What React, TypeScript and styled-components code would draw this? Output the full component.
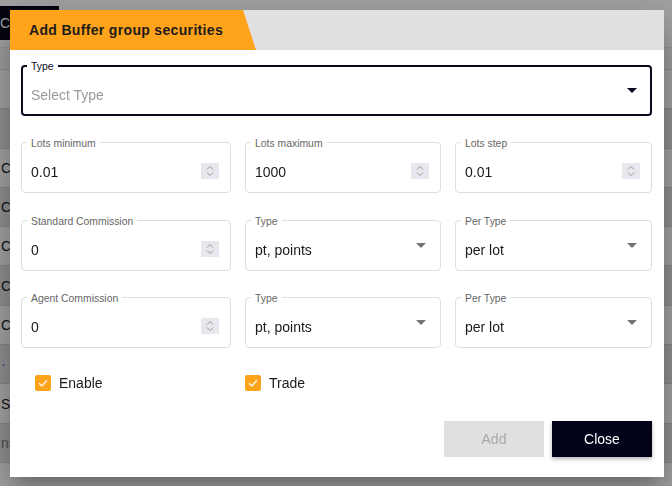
import React from "react";
import styled, { createGlobalStyle } from "styled-components";

const Global = createGlobalStyle`
  html, body { margin: 0; padding: 0; }
  body {
    font-family: "Liberation Sans", Arial, sans-serif;
    background: #ffffff;
    width: 672px;
    height: 486px;
    overflow: hidden;
  }
  * { box-sizing: border-box; }
`;

/* ---------- background page ---------- */
const Page = styled.div`
  width: 672px;
  height: 486px;
  overflow: hidden;
  background: #ffffff;
`;

const TopBar = styled.div`
  height: 48px;
  display: flex;
  align-items: flex-start;
  padding-top: 6px;
  border-bottom: 1px solid #e4e4e4;
`;

const DarkButton = styled.div`
  width: 59px;
  height: 34px;
  background: #060618;
  color: #ffffff;
  font-size: 14px;
  display: flex;
  align-items: center;
`;

const Clip = styled.span`
  width: 10px;
  overflow: hidden;
  white-space: nowrap;
`;

const TableHead = styled.div`
  height: 22px;
  border-bottom: 1px solid #dadada;
  background: #f6f6f6;
`;

const Row = styled.div<{ $alt: boolean; $tone?: string }>`
  height: 39.3px;
  display: flex;
  align-items: center;
  padding-left: 1px;
  font-size: 14px;
  color: ${(p) => (p.$tone === "link" ? "#1c5fd0" : p.$tone === "muted" ? "#777" : "#1a1a1a")};
  background: ${(p) => (p.$alt ? "#e2e2e2" : "#ffffff")};
  border-bottom: 1px solid #d6d6d6;
  white-space: nowrap;
`;

const Overlay = styled.div`
  position: fixed;
  inset: 0;
  background: rgba(0, 0, 0, 0.37);
`;

/* ---------- modal ---------- */
const Modal = styled.div`
  position: fixed;
  left: 10px;
  top: 10px;
  width: 654px;
  background: #ffffff;
  box-shadow: 0 11px 15px -7px rgba(0, 0, 0, 0.2), 0 24px 38px 3px rgba(0, 0, 0, 0.14),
    0 9px 46px 8px rgba(0, 0, 0, 0.12);
`;

const Header = styled.div`
  height: 40px;
  background: #e0e0e0;
  display: flex;
`;

const Tab = styled.div`
  width: 246px;
  height: 100%;
  background: #ffa31a;
  clip-path: polygon(0 0, 233px 0, 246px 100%, 0 100%);
  display: flex;
  align-items: center;
  padding-left: 19px;
  font-weight: 700;
  font-size: 14px;
  letter-spacing: 0.33px;
  color: #1c1c1c;
  white-space: nowrap;
`;

const Body = styled.div`
  padding: 15px 12px 20px 11px;
  display: flex;
  flex-direction: column;
`;

const Stack = styled.div`
  display: flex;
  flex-direction: column;
  gap: 26px;
`;

const Grid = styled.div<{ $shift?: number }>`
  display: grid;
  grid-template-columns: 210px 196px 1fr;
  column-gap: 14px;
  margin-top: ${(p) => p.$shift ?? 0}px;
`;

const Field = styled.div<{ $focused?: boolean }>`
  position: relative;
  height: 51px;
  border: ${(p) => (p.$focused ? "2px solid #0b0b1f" : "1px solid #dedede")};
  border-radius: 4px;
  display: flex;
  align-items: center;
  padding: 9px ${(p) => (p.$focused ? "13px" : "14px")} 0 ${(p) => (p.$focused ? "8px" : "9px")};
`;

const FloatLabel = styled.span<{ $focused?: boolean }>`
  position: absolute;
  top: ${(p) => (p.$focused ? "-6px" : "-5px")};
  left: ${(p) => (p.$focused ? "4px" : "5px")};
  padding: 0 4px;
  background: #ffffff;
  font-size: 10.4px;
  line-height: 12px;
  color: ${(p) => (p.$focused ? "#0b0b1f" : "#666666")};
  white-space: nowrap;
`;

const Value = styled.span<{ $placeholder?: boolean }>`
  flex: 1;
  font-size: 14px;
  color: ${(p) => (p.$placeholder ? "#9a9a9a" : "#1a1a1a")};
  white-space: nowrap;
`;

const Spinner = styled.span`
  width: 18px;
  height: 16px;
  background: #e7e7ed;
  display: flex;
  align-items: center;
  justify-content: center;
  margin-right: -3px;
  margin-bottom: 2px;
`;

const ArrowWrap = styled.span`
  display: flex;
  margin-bottom: 9px;
`;

const CheckRow = styled(Grid)`
  margin-top: 27px;
  height: 16px;
  align-items: center;
`;

const CheckItem = styled.label<{ $indent: number }>`
  display: flex;
  align-items: center;
  gap: 8px;
  padding-left: ${(p) => p.$indent}px;
  font-size: 14px;
  color: #1a1a1a;
`;

const Box = styled.span`
  width: 16px;
  height: 16px;
  border-radius: 2px;
  background: #ffa31a;
  display: flex;
  align-items: center;
  justify-content: center;
`;

const Actions = styled.div`
  margin-top: 30px;
  display: flex;
  justify-content: flex-end;
  gap: 8px;
`;

const Button = styled.button<{ $primary?: boolean }>`
  width: 100px;
  height: 36px;
  border: none;
  font-family: "Liberation Sans", Arial, sans-serif;
  font-size: 14px;
  background: ${(p) => (p.$primary ? "#020218" : "#e0e0e0")};
  color: ${(p) => (p.$primary ? "#ffffff" : "#a9a9a9")};
  box-shadow: ${(p) => (p.$primary ? "0 2px 4px rgba(0,0,0,0.3)" : "none")};
  cursor: pointer;
`;

const SpinIcon = () => (
  <svg width="10" height="12" viewBox="0 0 10 12">
    <polyline points="2,4.5 5,1.5 8,4.5" fill="none" stroke="#9b9b9b" strokeWidth="1" />
    <polyline points="2,7.5 5,10.5 8,7.5" fill="none" stroke="#9b9b9b" strokeWidth="1" />
  </svg>
);

const Arrow = ({ color }: { color: string }) => (
  <svg width="10" height="5" viewBox="0 0 10 5">
    <polygon points="0,0 10,0 5,5" fill={color} />
  </svg>
);

const CheckIcon = () => (
  <svg width="12" height="12" viewBox="0 0 12 12">
    <polyline points="2,6.3 4.8,9 10,3.3" fill="none" stroke="#fff6e8" strokeWidth="1.4" />
  </svg>
);

type FieldDef = { label: string; value: string; kind: "number" | "select" };

const rows: FieldDef[][] = [
  [
    { label: "Lots minimum", value: "0.01", kind: "number" },
    { label: "Lots maximum", value: "1000", kind: "number" },
    { label: "Lots step", value: "0.01", kind: "number" },
  ],
  [
    { label: "Standard Commission", value: "0", kind: "number" },
    { label: "Type", value: "pt, points", kind: "select" },
    { label: "Per Type", value: "per lot", kind: "select" },
  ],
  [
    { label: "Agent Commission", value: "0", kind: "number" },
    { label: "Type", value: "pt, points", kind: "select" },
    { label: "Per Type", value: "per lot", kind: "select" },
  ],
];

const bgRows: { text: string; tone?: string }[] = [
  { text: "" },
  { text: "" },
  { text: "C" },
  { text: "C" },
  { text: "C" },
  { text: "C" },
  { text: "C" },
  { text: "·", tone: "link" },
  { text: "St" },
  { text: "ns", tone: "muted" },
  { text: "" },
];

export default function App() {
  return (
    <>
      <Global />
      <Page>
        <TopBar>
          <DarkButton>
            <Clip>CU</Clip>
          </DarkButton>
        </TopBar>
        <TableHead />
        {bgRows.map((r, i) => (
          <Row key={i} $alt={i % 2 === 1} $tone={r.tone}>
            {r.text}
          </Row>
        ))}
      </Page>
      <Overlay />
      <Modal>
        <Header>
          <Tab>Add Buffer group securities</Tab>
        </Header>
        <Body>
          <Stack>
            <Field $focused>
              <FloatLabel $focused>Type</FloatLabel>
              <Value $placeholder>Select Type</Value>
              <ArrowWrap>
                <Arrow color="#0b0b1f" />
              </ArrowWrap>
            </Field>
            {rows.map((row, ri) => (
              <Grid key={ri} $shift={ri === 1 ? 1 : 0}>
                {row.map((f, fi) => (
                  <Field key={fi}>
                    <FloatLabel>{f.label}</FloatLabel>
                    <Value>{f.value}</Value>
                    {f.kind === "number" ? (
                      <Spinner>
                        <SpinIcon />
                      </Spinner>
                    ) : (
                      <ArrowWrap>
                        <Arrow color="#757575" />
                      </ArrowWrap>
                    )}
                  </Field>
                ))}
              </Grid>
            ))}
          </Stack>
          <CheckRow>
            <CheckItem $indent={14}>
              <Box>
                <CheckIcon />
              </Box>
              Enable
            </CheckItem>
            <CheckItem $indent={0}>
              <Box>
                <CheckIcon />
              </Box>
              Trade
            </CheckItem>
          </CheckRow>
          <Actions>
            <Button disabled>Add</Button>
            <Button $primary>Close</Button>
          </Actions>
        </Body>
      </Modal>
    </>
  );
}
